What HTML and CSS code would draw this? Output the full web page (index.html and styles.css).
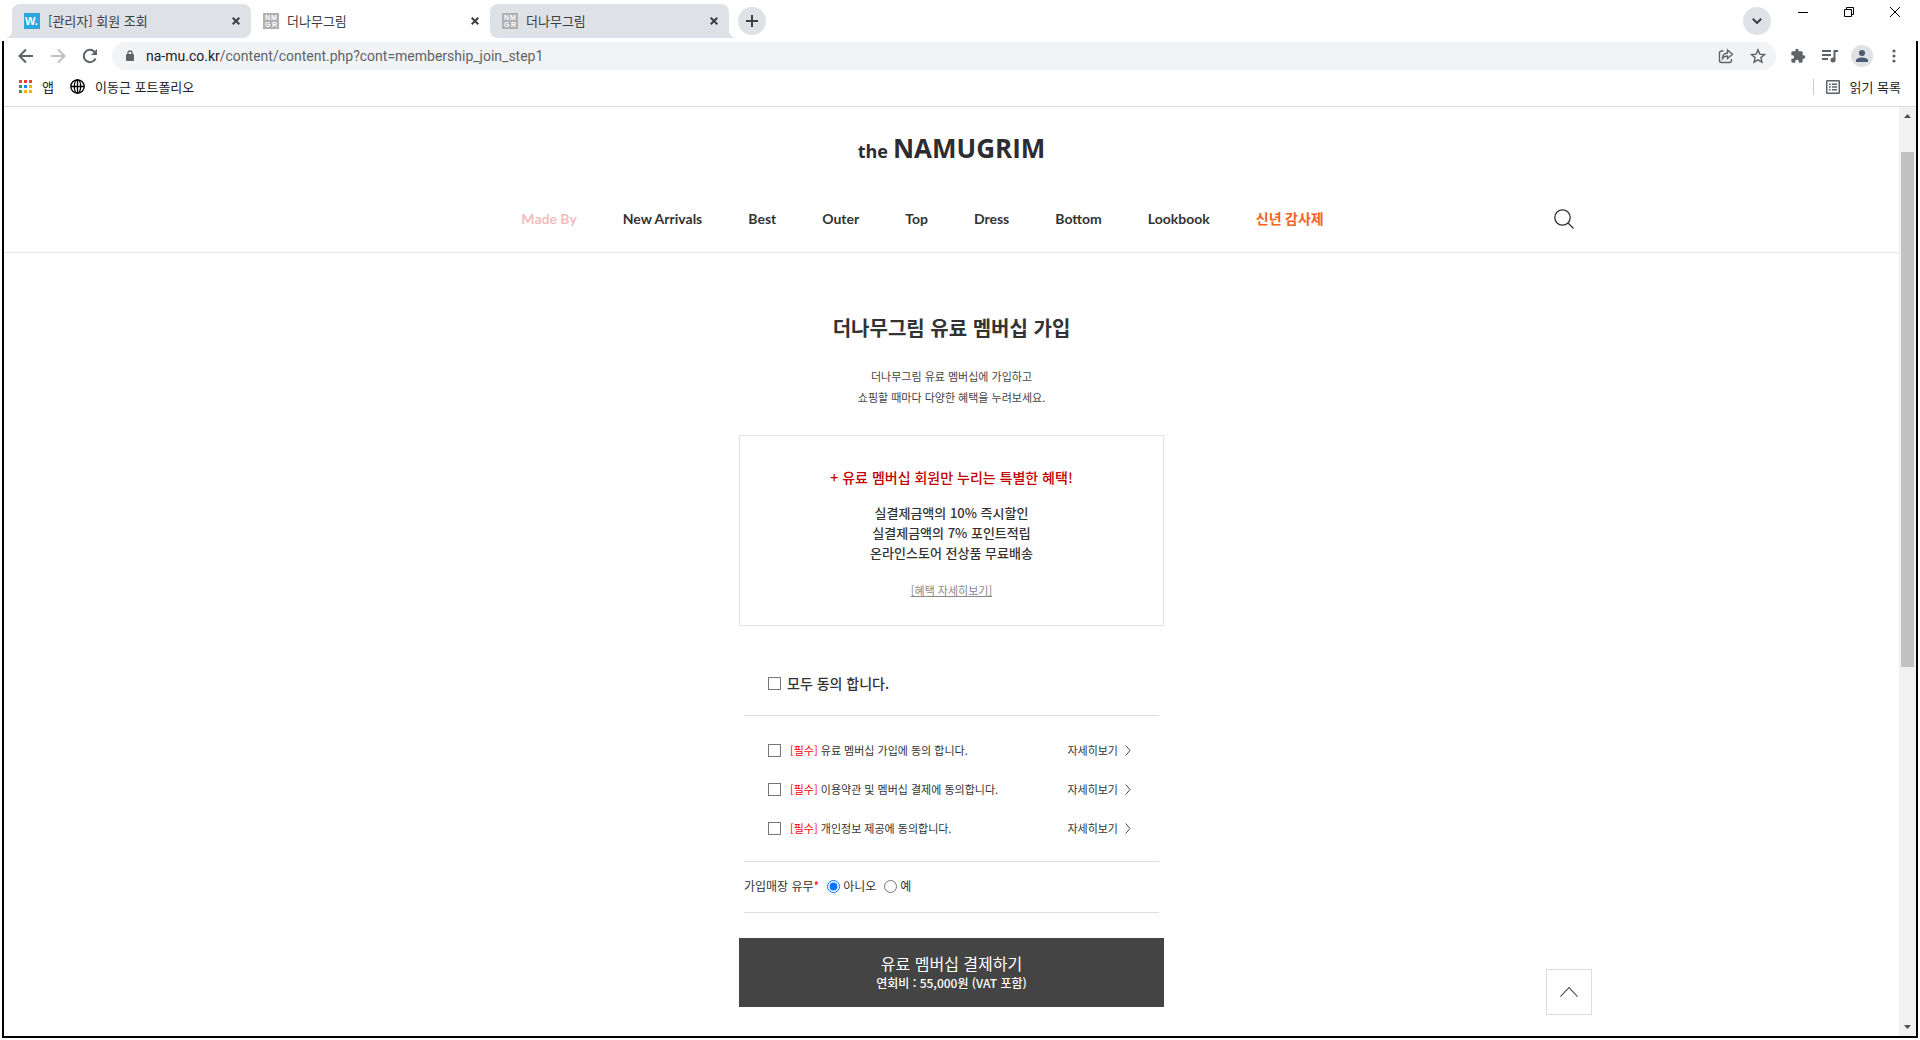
FILE: index.html
```html
<!DOCTYPE html>
<html lang="ko">
<head>
<meta charset="utf-8">
<meta name="viewport" content="width=device-width, initial-scale=1">
<title>더나무그림</title>
<link rel="stylesheet" href="styles.css">
</head>
<body>
<div class="tabstrip">
  <div class="tab tab-shaded tab-first">
    <svg class="favicon" viewBox="0 0 16 16"><rect width="16" height="16" fill="#2ba6de"/><text x="1" y="12" font-size="11">W.</text></svg>
    <span class="tab-title">[관리자] 회원 조회</span>
    <button class="tab-close" aria-label="탭 닫기"><svg width="8" height="8" viewBox="0 0 8 8"><path d="M.7.7l6.600 6.600M7.300.7.7 7.300"/></svg></button>
  </div>
  <div class="tab">
    <svg class="favicon" viewBox="0 0 16 16"><rect width="16" height="16" fill="#b0b0b0"/><text x="2" y="7" font-size="7">N</text><text x="8" y="7" font-size="7">M</text><text x="2" y="14" font-size="7">G</text><text x="9" y="14" font-size="7">R</text></svg>
    <span class="tab-title">더나무그림</span>
    <button class="tab-close" aria-label="탭 닫기"><svg width="8" height="8" viewBox="0 0 8 8"><path d="M.7.7l6.600 6.600M7.300.7.7 7.300"/></svg></button>
  </div>
  <div class="tab tab-shaded tab-last">
    <svg class="favicon" viewBox="0 0 16 16"><rect width="16" height="16" fill="#b0b0b0"/><text x="2" y="7" font-size="7">N</text><text x="8" y="7" font-size="7">M</text><text x="2" y="14" font-size="7">G</text><text x="9" y="14" font-size="7">R</text></svg>
    <span class="tab-title">더나무그림</span>
    <button class="tab-close" aria-label="탭 닫기"><svg width="8" height="8" viewBox="0 0 8 8"><path d="M.7.7l6.600 6.600M7.300.7.7 7.300"/></svg></button>
  </div>
  <button class="round-button" aria-label="새 탭"><svg width="12" height="12" viewBox="0 0 12 12"><path d="M6 0v12M0 6h12"/></svg></button>
  <div class="window-controls">
    <button class="round-button" aria-label="탭 검색"><svg width="10" height="6" viewBox="0 0 10 6"><path d="m.8.8 4.200 4.200L9.200.8"/></svg></button>
    <button class="window-button" aria-label="최소화"><svg width="10" height="10" viewBox="0 0 10 10"><path d="M0 5.500h10"/></svg></button>
    <button class="window-button" aria-label="이전 크기로 복원"><svg width="10" height="10" viewBox="0 0 10 10"><path d="M.5 2.500h7v7h-7zM2.500 2.500v-2h7v7h-2"/></svg></button>
    <button class="window-button" aria-label="닫기"><svg width="10" height="10" viewBox="0 0 10 10"><path d="m0 0 10 10M10 0 0 10"/></svg></button>
  </div>
</div>

<div class="frame">
  <div class="toolbar">
    <button class="tool" aria-label="뒤로"><svg width="16" height="16" viewBox="0 0 16 16"><path class="line" d="M15 8H2M8 1.500 1.500 8 8 14.500"/></svg></button>
    <button class="tool tool-off" aria-label="앞으로"><svg width="16" height="16" viewBox="0 0 16 16"><path class="line" d="M1 8h13M8 1.500 14.500 8 8 14.500"/></svg></button>
    <button class="tool" aria-label="새로고침"><svg width="16" height="16" viewBox="0 0 16 16"><path class="line" d="M13.600 10.500A6.200 6.200 0 1 1 12.400 3.600L14 5.200"/><path d="M15 1v6H9z"/></svg></button>
    <div class="address">
      <svg class="lock" width="8" height="12" viewBox="0 0 8 12"><rect y="4" width="8" height="7" rx="1"/><path d="M2 4.500V3a2 2 0 0 1 4 0v1.500" fill="none" stroke="#5f6368" stroke-width="1.400"/></svg>
      <span class="url"><span class="url-host">na-mu.co.kr</span>/content/content.php?cont=membership_join_step1</span>
      <button class="tool" aria-label="공유"><svg width="16" height="16" viewBox="0 0 16 16"><path class="thin" d="M5.500 3H3.500a2 2 0 0 0-2 2v7.500a2 2 0 0 0 2 2h8a2 2 0 0 0 2-2V11M4.500 10.500C4.700 7 6.500 5.200 9.500 5V2L14.500 6.300 9.500 10.500V8C7 8 5.500 9 4.500 10.500z"/></svg></button>
      <button class="tool" aria-label="북마크"><svg width="16" height="16" viewBox="0 0 16 16"><path class="thin" d="m8 1.800 1.800 4.300 4.700.4-3.600 3.100 1.100 4.600L8 11.800l-4 2.400 1.100-4.600L1.500 6.500l4.700-.4z"/></svg></button>
    </div>
    <div class="toolbar-actions">
      <button class="tool" aria-label="확장 프로그램"><svg width="16" height="16" viewBox="0 0 24 24"><path d="M20.500 11H19V7a2 2 0 0 0-2-2h-4V3.500a2.500 2.500 0 0 0-5 0V5H4a2 2 0 0 0-2 2v3.800h1.500a2.700 2.700 0 0 1 0 5.400H2V20a2 2 0 0 0 2 2h3.800v-1.500a2.700 2.700 0 0 1 5.400 0V22H17a2 2 0 0 0 2-2v-4h1.500a2.500 2.500 0 0 0 0-5z"/></svg></button>
      <button class="tool" aria-label="미디어"><svg width="16" height="16" viewBox="0 0 16 16"><path class="mid" d="M0 3h9M0 7h9M0 11h6M12.500 12V3H16"/><circle cx="11" cy="12" r="2.500"/></svg></button>
      <button class="tool avatar" aria-label="프로필"><svg width="12" height="12" viewBox="0 0 12 12"><circle cx="6" cy="3" r="3"/><path d="M0 12v-1.500C0 8.500 3 7.500 6 7.500s6 1 6 3V12z"/></svg></button>
      <button class="tool" aria-label="메뉴"><svg width="4" height="14" viewBox="0 0 4 14"><circle cx="2" cy="2" r="1.600"/><circle cx="2" cy="7" r="1.600"/><circle cx="2" cy="12" r="1.600"/></svg></button>
    </div>
  </div>

  <div class="bookmarks">
    <a class="bookmark" href="#apps"><svg width="13" height="13" viewBox="0 0 13 13"><path fill="#ea4335" d="M0 0h3v3H0zM5 0h3v3H5zM10 0h3v3h-3z"/><path fill="#34a15a" d="M0 5h3v3H0zM0 10h3v3H0z"/><path fill="#1a82f0" d="M5 5h3v3H5z"/><path fill="#fbae05" d="M10 5h3v3h-3zM5 10h3v3H5zM10 10h3v3h-3z"/></svg>앱</a>
    <a class="bookmark" href="#portfolio"><svg width="15" height="15" viewBox="0 0 15 15" fill="none" stroke="#000" stroke-width="1.300"><circle cx="7.500" cy="7.500" r="6.700"/><ellipse cx="7.500" cy="7.500" rx="3.200" ry="6.700"/><path d="M.8 7.500h13.400M7.500.8v13.400"/></svg>이동근 포트폴리오</a>
    <a class="bookmark reading" href="#reading"><svg width="14" height="14" viewBox="0 0 14 14" fill="none" stroke="#5f6368"><rect x=".75" y=".75" width="12.500" height="12.500" rx=".5" stroke-width="1.500"/><path stroke-width="1.500" d="M3 4.200h1.700M6 4.200h5M3 7h1.700M6 7h5M3 9.800h1.700M6 9.800h5"/></svg>읽기 목록</a>
  </div>

  <div class="viewport">
    <div class="page">
      <header class="site-header">
        <a class="logo" href="#home"><span class="logo-the">the</span><span>NAMUGRIM</span></a>
        <div class="menu">
          <nav class="nav">
            <a class="nav-pink" href="#made">Made By</a>
            <a href="#new">New Arrivals</a>
            <a href="#best">Best</a>
            <a href="#outer">Outer</a>
            <a href="#top">Top</a>
            <a href="#dress">Dress</a>
            <a href="#bottom">Bottom</a>
            <a href="#lookbook">Lookbook</a>
            <a class="nav-event" href="#event">신년 감사제</a>
          </nav>
          <button class="search" aria-label="검색"><svg width="20" height="20" viewBox="0 0 20 20"><circle cx="8.500" cy="8.500" r="7.700"/><path d="m14 14 5.500 5.500"/></svg></button>
        </div>
      </header>

      <main class="join">
        <h1 class="title">더나무그림 유료 멤버십 가입</h1>
        <p class="intro">더나무그림 유료 멤버십에 가입하고<br>쇼핑할 때마다 다양한 혜택을 누려보세요.</p>
        <section class="benefit">
          <h2 class="benefit-title">+ 유료 멤버십 회원만 누리는 특별한 혜택!</h2>
          <p class="benefit-list">실결제금액의 10% 즉시할인<br>실결제금액의 7% 포인트적립<br>온라인스토어 전상품 무료배송</p>
          <a class="benefit-link" href="#benefit">[혜택 자세히보기]</a>
        </section>
        <form class="form">
          <div class="agree-all"><input class="check" type="checkbox" id="all"><label for="all">모두 동의 합니다.</label></div>
          <div class="agree-list">
            <div class="agree"><input class="check" type="checkbox" id="a1"><label for="a1"><span class="required">[필수]</span> 유료 멤버십 가입에 동의 합니다.</label><a class="detail" href="#d1">자세히보기<svg width="6" height="11" viewBox="0 0 6 11"><path d="m.7.5 4.300 5-4.300 5"/></svg></a></div>
            <div class="agree"><input class="check" type="checkbox" id="a2"><label for="a2"><span class="required">[필수]</span> 이용약관 및 멤버십 결제에 동의합니다.</label><a class="detail" href="#d2">자세히보기<svg width="6" height="11" viewBox="0 0 6 11"><path d="m.7.5 4.300 5-4.300 5"/></svg></a></div>
            <div class="agree"><input class="check" type="checkbox" id="a3"><label for="a3"><span class="required">[필수]</span> 개인정보 제공에 동의합니다.</label><a class="detail" href="#d3">자세히보기<svg width="6" height="11" viewBox="0 0 6 11"><path d="m.7.5 4.300 5-4.300 5"/></svg></a></div>
          </div>
          <div class="store" role="radiogroup" aria-labelledby="store-label">
            <span id="store-label">가입매장 유무<span class="required">*</span></span>
            <span class="option"><input type="radio" name="store" id="no" checked><label for="no">아니오</label></span>
            <span class="option"><input type="radio" name="store" id="yes"><label for="yes">예</label></span>
          </div>
          <button class="pay" type="button"><span class="pay-title">유료 멤버십 결제하기</span><span class="pay-fee">연회비 : 55,000원 (VAT 포함)</span></button>
        </form>
      </main>
      <div class="float-layer"><button class="to-top" aria-label="맨 위로"><svg width="18" height="10" viewBox="0 0 18 10"><path d="m.4 9.600 8.600-9 8.600 9"/></svg></button></div>
    </div>
    <div class="scrollbar">
      <svg class="arrow" width="7" height="4" viewBox="0 0 7 4"><path d="M3.500 0 7 4H0z"/></svg>
      <div class="track-before"></div>
      <div class="thumb"></div>
      <div class="track-after"></div>
      <svg class="arrow" width="7" height="4" viewBox="0 0 7 4"><path d="M0 0h7L3.500 4z"/></svg>
    </div>
  </div>
</div>
</body>
</html>
```
FILE: styles.css
```css
* { box-sizing: border-box; }

body {
  margin: 0;
  min-height: 100vh;
  display: flex;
  flex-direction: column;
  padding-bottom: 2px;
  background: #fff;
  color: #333;
  font: 13px/20px "Noto Sans CJK KR", sans-serif;
}

h1, h2, p { margin: 0; }
a { color: inherit; text-decoration: none; }
svg { display: block; flex: none; }
input { margin: 0; flex: none; }

button {
  display: flex;
  align-items: center;
  justify-content: center;
  padding: 0;
  border: 0;
  background: none;
  color: inherit;
  font: inherit;
}

/* Tab strip */
.tabstrip {
  display: flex;
  align-items: flex-start;
  height: 41px;
  padding: 4px 2px 0 12px;
}

.tab {
  position: relative;
  display: flex;
  align-items: center;
  flex: 0 1 239px;
  height: 34px;
  padding: 0 11px 0 12px;
  border-radius: 8px;
  color: #3c4043;
}

.tab-shaded { background: #dee1e6; }

.tab-first::before,
.tab-last::after {
  content: "";
  position: absolute;
  bottom: 0;
  width: 8px;
  height: 8px;
}

.tab-first { border-bottom-left-radius: 0; }
.tab-first::before { left: -8px; background: radial-gradient(circle at 0 0, transparent 8px, #dee1e6 8px); }
.tab-last { border-bottom-right-radius: 0; }
.tab-last::after { right: -8px; background: radial-gradient(circle at 100% 0, transparent 8px, #dee1e6 8px); }

.favicon {
  width: 16px;
  height: 16px;
  fill: #fff;
  font-family: "Liberation Sans", sans-serif;
  font-weight: 700;
}
.tab-title { flex: 1; margin-left: 8px; white-space: nowrap; }
.tab-close { width: 8px; height: 16px; }
.tab-close path { stroke: #3c4043; stroke-width: 2; }

.round-button {
  width: 28px;
  height: 28px;
  margin: 3px 0 0 9px;
  border-radius: 50%;
  background: #dee1e6;
}
.round-button path { fill: none; stroke: #3c4043; stroke-width: 2; }

.window-controls { display: flex; margin-left: auto; }
.window-button { width: 46px; height: 16px; }
.window-controls .round-button { margin-right: 9px; }
.window-button path { fill: none; stroke: #000; }

/* Browser window */
.frame {
  flex: 1;
  display: flex;
  flex-direction: column;
  margin: 0 2px;
  border: 2px solid #000;
  border-top: 0;
}

.toolbar {
  display: flex;
  align-items: center;
  gap: 16px;
  height: 30px;
  padding: 0 14px;
}

.tool { width: 16px; height: 16px; fill: #5f6368; }
.tool-off { opacity: 0.4; }
.line { fill: none; stroke: #5f6368; stroke-width: 2; }
.mid { fill: none; stroke: #5f6368; stroke-width: 2; }
.thin { fill: none; stroke: #5f6368; stroke-width: 1.4; }

.address {
  flex: 1;
  display: flex;
  align-items: center;
  gap: 16px;
  height: 28px;
  margin: 0 -2px;
  padding: 0 10px 0 14px;
  border-radius: 14px;
  background: #f1f3f4;
  color: #5f6368;
  font: 14px/20px Roboto, sans-serif;
}

.lock { fill: #5f6368; }
.url { flex: 1; margin-left: -4px; }
.url-host { color: #202124; }

.toolbar-actions { display: flex; align-items: center; gap: 16px; }
.toolbar-actions .avatar {
  width: 22px;
  height: 22px;
  margin: 0 -3px;
  border-radius: 50%;
  background: #dee1e6;
  fill: #4b5a70;
}

.bookmarks {
  display: flex;
  align-items: center;
  gap: 16px;
  height: 36px;
  padding: 0 15px 4px;
  border-bottom: 1px solid #dadce0;
  color: #202124;
}
.bookmark { display: flex; align-items: center; gap: 10px; line-height: 16px; }
.reading { margin-left: auto; padding-left: 12px; border-left: 1px solid #c8cace; }

.viewport { flex: 1; display: flex; }

.page { position: relative; flex: 1; }

.scrollbar {
  display: flex;
  flex-direction: column;
  align-items: center;
  width: 17px;
  padding: 7px 2px;
  background: #f1f1f1;
}
.arrow { fill: #505050; }
.track-before { flex: 34; }
.thumb { flex: 515; width: 13px; background: #c1c1c1; }
.track-after { flex: 358; }

/* Shop header */
.site-header {
  display: flex;
  flex-direction: column;
  align-items: center;
  padding: 25px 0 18px;
  border-bottom: 1px solid #e5e5e5;
}

.logo {
  display: flex;
  align-items: baseline;
  gap: 5px;
  color: #2d2c30;
  font: 700 26px/32px "Open Sans", sans-serif;
}
.logo-the { font-size: 18px; }

.menu {
  display: flex;
  align-items: center;
  width: 100%;
  max-width: 1280px;
  margin-top: 37px;
  padding-right: 18px;
}

.nav {
  flex: 1;
  display: flex;
  justify-content: center;
  gap: 46px;
  font: 700 14px/30px Lato, "Noto Sans CJK KR", sans-serif;
  white-space: nowrap;
}
.nav-pink { color: #f2bcbc; }
.nav-event { color: #f26322; }

.search { width: 20px; height: 20px; margin-left: 20px; }
.search svg { fill: none; stroke: #333; stroke-width: 1.3; }

/* Membership form */
.join {
  max-width: 425px;
  margin: 0 auto;
  padding: 59px 0 24px;
  text-align: center;
}

.title { font-size: 20px; font-weight: 700; line-height: 32px; }

.intro {
  margin-top: 22px;
  color: #444;
  font-size: 11px;
  line-height: 21px;
}

.benefit {
  margin-top: 27px;
  padding: 29px 20px 25px;
  border: 1px solid #e3e3e3;
}
.benefit-title { color: #c40000; font-size: 14px; font-weight: 500; line-height: 24px; }
.benefit-list { margin: 14px 0 17px; font-weight: 500; }
.benefit-link {
  display: block;
  color: #888;
  font-size: 11px;
  text-decoration: underline;
}

.form { text-align: left; }

.check {
  appearance: none;
  width: 13px;
  height: 13px;
  border: 1px solid #767676;
  background: #fff;
}
.check:checked { background: #0075ff; }

.agree-all {
  display: flex;
  align-items: center;
  gap: 6px;
  margin: 47px 5px 0;
  padding: 0 24px 22px;
  border-bottom: 1px solid #ddd;
  font-size: 14px;
  font-weight: 500;
}

.agree-list {
  display: flex;
  flex-direction: column;
  gap: 19px;
  margin: 0 5px;
  padding: 24px 28px 23px 24px;
  border-bottom: 1px solid #ddd;
  font-size: 11px;
}
.agree { display: flex; align-items: center; gap: 9px; }
.required { color: #f00; }
.detail { display: flex; align-items: center; gap: 7px; margin-left: auto; }
.detail path { fill: none; stroke: #444; }

.store {
  display: flex;
  align-items: center;
  gap: 8px;
  margin: 0 5px;
  padding: 14px 0 16px;
  border-bottom: 1px solid #ddd;
  font-size: 12px;
}
.option { display: flex; align-items: center; gap: 3px; }
.option input { width: 13px; height: 13px; }

.pay {
  flex-direction: column;
  width: 100%;
  margin-top: 25px;
  padding: 13px 0 16px;
  background: #444;
  color: #fff;
}
.pay-title { font-size: 16px; line-height: 24px; }
.pay-fee { font-size: 12px; line-height: 16px; font-weight: 500; }

/* Back-to-top button floats over the page */
.float-layer {
  position: absolute;
  right: 0;
  bottom: 21px;
  left: 0;
  display: flex;
  justify-content: flex-end;
  max-width: 1280px;
  margin: 0 auto;
}
.to-top { width: 46px; height: 46px; border: 1px solid #ddd; background: #fff; }
.to-top path { fill: none; stroke: #555; stroke-width: 1.2; }
```
